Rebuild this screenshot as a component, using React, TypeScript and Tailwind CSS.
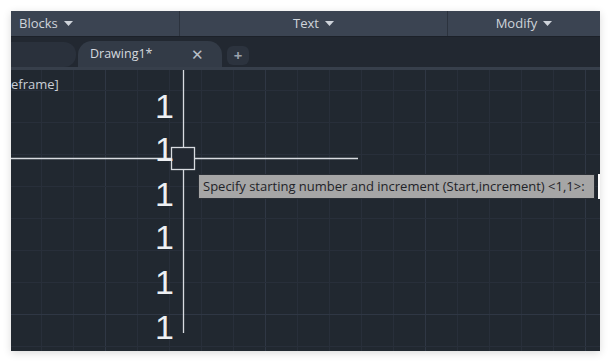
import React from "react";

const font = { fontFamily: '"Open Sans", "Noto Sans", sans-serif' };

function Caret() {
  return (
    <svg width="9" height="5" viewBox="0 0 9 5" className="inline-block ml-[6px]">
      <path d="M0 0 L9 0 L4.5 5 Z" fill="#cfd4db" />
    </svg>
  );
}

function Grid() {
  const xs: number[] = [];
  for (let x = 105 - 11 - 32 * 3; x < 600; x += 32) xs.push(x);
  const ys: number[] = [];
  for (let y = 314 - 70 - 32 * 8; y < 290; y += 32) ys.push(y);
  return (
    <svg className="absolute inset-0" width="589" height="281">
      {xs.map((x) => (
        <line key={"x" + x} x1={x + 0.5} y1={0} x2={x + 0.5} y2={281} stroke={(x + 11 - 105) % 160 === 0 ? "#2f3744" : "#282f3a"} strokeWidth={1} />
      ))}
      {ys.map((y) => (
        <line key={"y" + y} x1={0} y1={y + 0.5} x2={589} y2={y + 0.5} stroke={y === 314 - 70 ? "#2f3744" : "#282f3a"} strokeWidth={1} />
      ))}
      <line x1={172.5} y1={0} x2={172.5} y2={263} stroke="#d8dbe0" strokeWidth={1.3} />
      <line x1={0} y1={88.5} x2={347} y2={88.5} stroke="#d8dbe0" strokeWidth={1.3} />
      <rect x={160.5} y={77.5} width={23} height={22} fill="#222831" stroke="#d8dbe0" strokeWidth={1.3} />
    </svg>
  );
}

export default function App() {
  const ones = [96, 139, 184, 227, 272, 317];
  return (
    <div className="w-[612px] h-[362px] bg-white p-[11px] pr-[12px] pb-[11px]" style={font}>
      <div className="w-[589px] h-[340px] bg-[#212830] flex flex-col overflow-hidden shadow-[0_2px_8px_rgba(0,0,0,0.15)]">
        <div className="h-[25px] bg-[#3b4452] flex text-[13px] text-[#cfd4db] leading-none">
          <div className="w-[169px] border-r border-[#2c333e] flex items-center pl-[8px]">
            Blocks<Caret />
          </div>
          <div className="w-[268px] border-r border-[#2c333e] flex items-center justify-center">
            Text<Caret />
          </div>
          <div className="flex-1 flex items-center justify-center">
            Modify<Caret />
          </div>
        </div>
        <div className="h-[1px] bg-[#1c2129]" />
        <div className="h-[30px] bg-[#222831] relative">
          <div className="absolute left-0 top-[5px] w-[65px] h-[25px] bg-[#2a313c] rounded-r-[12px]" />
          <div className="absolute left-[67px] top-[4px] w-[144px] h-[26px] bg-[#333b47] rounded-t-[14px] flex items-center text-[12.5px] text-[#d4d8de]">
            <span className="ml-[12px]">Drawing1*</span>
            <span className="ml-[39px] text-[15px] text-[#b9bfc8]">✕</span>
          </div>
          <div className="absolute left-[216px] top-[9px] w-[22px] h-[19px] bg-[#2c333e] rounded-[6px] flex items-center justify-center text-[15px] font-bold text-[#9aa1ab] leading-none">
            +
          </div>
        </div>
        <div className="h-[3px] bg-[#373f4b]" />
        <div className="relative flex-1 bg-[#212830]">
          <Grid />
          <div className="absolute left-0 top-[8px] text-[13px] text-[#c9ced6] leading-none">eframe]</div>
          {ones.map((t, i) => (
            <div
              key={i}
              className="absolute left-[144px] text-[34px] leading-none text-[#eef0f3]"
              style={{ top: t - 70 - 7, fontFamily: '"Liberation Sans", Arial, sans-serif' }}
            >
              1
            </div>
          ))}
          <div className="absolute left-[187px] top-[104px] w-[397px] h-[25px] bg-[#a6a6a6] border border-[#2a2f36] flex items-center pl-[4px] text-[13px] text-[#1f2328] leading-none">
            Specify starting number and increment (Start,increment) &lt;1,1&gt;:
          </div>
          <div className="absolute left-[587px] top-[104px] w-[4px] h-[25px] bg-white" />
        </div>
      </div>
    </div>
  );
}
